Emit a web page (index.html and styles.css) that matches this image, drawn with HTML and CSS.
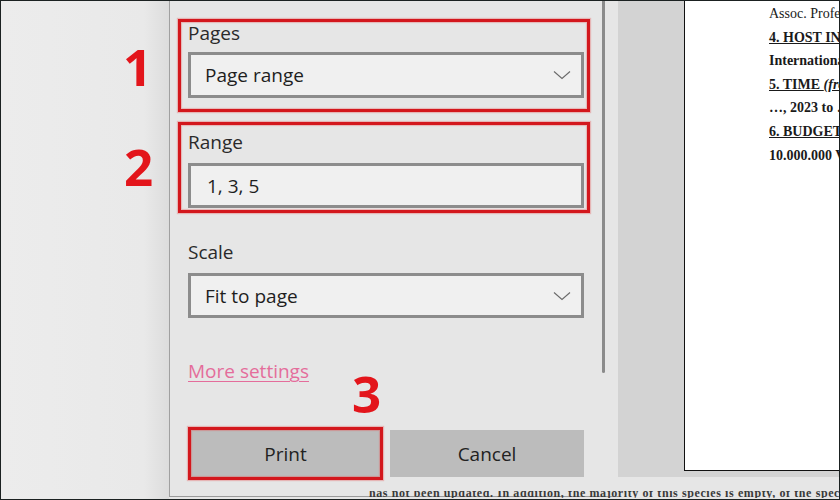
FILE: index.html
```html
<!DOCTYPE html>
<html>
<head>
<meta charset="utf-8">
<link rel="stylesheet" href="styles.css">
</head>
<body>
<div class="frame">
  <div class="backdrop"></div>
  <div class="panel">
    <div class="panel-body">
      <div class="group group-pages">
        <div class="label">Pages</div>
        <div class="select">
          <span>Page range</span>
          <svg class="chev" width="18" height="10" viewBox="0 0 18 10"><path d="M1 1.5 L9 8.5 L17 1.5" fill="none" stroke="#6a6a6a" stroke-width="1.1"/></svg>
        </div>
      </div>
      <div class="group group-range">
        <div class="label">Range</div>
        <div class="input">1, 3, 5</div>
      </div>
      <div class="label label-scale">Scale</div>
      <div class="select">
        <span>Fit to page</span>
        <svg class="chev" width="18" height="10" viewBox="0 0 18 10"><path d="M1 1.5 L9 8.5 L17 1.5" fill="none" stroke="#6a6a6a" stroke-width="1.1"/></svg>
      </div>
      <div class="more-row"><a class="more">More settings</a></div>
      <div class="buttons">
        <div class="btn btn-print">Print</div>
        <div class="btn btn-cancel">Cancel</div>
      </div>
    </div>
    <div class="scrollbar"></div>
  </div>
  <div class="preview">
    <div class="preview-area">
      <div class="page">
        <div class="doc">
          <div class="doc-line">Assoc. Professor</div>
          <div class="doc-line b u">4. HOST INSTITUTION</div>
          <div class="doc-line b">International University</div>
          <div class="doc-line b u">5. TIME <i>(from … to …)</i></div>
          <div class="doc-line b">…, 2023 to …</div>
          <div class="doc-line b u">6. BUDGET ESTIMATE</div>
          <div class="doc-line b">10.000.000 VND</div>
        </div>
      </div>
    </div>
  </div>
  <span class="step step-1">1</span>
  <span class="step step-2">2</span>
  <span class="step step-3">3</span>
  <div class="strip"><span>has not been updated. In addition, the majority of this species is empty, of the species in the list</span></div>
</div>
</body>
</html>
```
FILE: styles.css
```css
html, body {
  margin: 0;
  padding: 0;
  background: #e6e6e6;
}
.frame {
  position: relative;
  width: 840px;
  height: 500px;
  box-sizing: border-box;
  border: 1px solid #1b2121;
  display: flex;
  overflow: hidden;
  background: #e6e6e6;
  font-family: "Open Sans", "Noto Sans", sans-serif;
  color: #222;
}
.backdrop {
  width: 168px;
  flex: none;
  background: linear-gradient(to right, #ececec 0, #e9e9e9 85%, #dcdcdc 100%);
}
.panel {
  width: 449px;
  height: 496px;
  flex: none;
  box-sizing: border-box;
  border-left: 1px solid #a0a0a0;
  border-bottom: 1px solid #9a9a9a;
  display: flex;
  align-items: flex-start;
  padding-left: 18px;
  padding-right: 13px;
  gap: 18px;
  background: #e6e6e6;
}
.panel-body {
  width: 396px;
  flex: none;
  display: flex;
  flex-direction: column;
}
.scrollbar {
  width: 3px;
  height: 372px;
  background: #8b8b8b;
  border-radius: 0 0 2px 2px;
  flex: none;
}
.label {
  font-size: 19px;
  line-height: 22px;
  color: #2a2a2a;
}
.group {
  border: 3px solid #d3171d;
  box-shadow: 0 0 1px 1px rgba(230, 90, 90, 0.35), inset 0 0 1px 1px rgba(230, 90, 90, 0.35);
  margin-left: -10px;
  margin-right: -6px;
  padding-left: 7px;
  padding-right: 3px;
}
.group-pages {
  margin-top: 18px;
  padding-bottom: 11px;
}
.group-pages .select {
  margin-top: 8px;
}
.group-range {
  margin-top: 10px;
  padding-top: 6px;
  padding-bottom: 2px;
}
.select, .input {
  box-sizing: border-box;
  height: 46px;
  border: 3px solid #8c8c8c;
  background: #f0f0f0;
  display: flex;
  align-items: center;
  padding-left: 14px;
  padding-right: 10px;
  font-size: 19px;
  color: #1e1e1e;
}
.select span {
  flex: 1;
}
.input {
  margin-top: 10px;
  height: 45px;
  padding-left: 16px;
}
.label-scale {
  margin-top: 28px;
}
.label-scale + .select {
  margin-top: 10px;
  height: 45px;
}
.chev {
  display: block;
  flex: none;
}
.more-row {
  margin-top: 42px;
  line-height: 22px;
  font-size: 19px;
}
.more {
  color: #e46d9b;
  text-decoration: underline;
  text-decoration-thickness: 1px;
  text-underline-offset: 3px;
}
.buttons {
  margin-top: 45px;
  display: flex;
  align-items: center;
  gap: 7px;
}
.btn {
  box-sizing: border-box;
  display: flex;
  align-items: center;
  justify-content: center;
  background: #bcbcbc;
  font-size: 19px;
  color: #222;
}
.btn-print {
  width: 195px;
  height: 53px;
  border: 3px solid #d3171d;
  box-shadow: 0 0 1px 1px rgba(230, 90, 90, 0.35), inset 0 0 1px 1px rgba(230, 90, 90, 0.4);
}
.btn-cancel {
  width: 194px;
  height: 47px;
}
.preview {
  flex: 1;
  background: #e6e6e6;
}
.preview-area {
  height: 476px;
  background: #d3d3d3;
  padding-left: 66px;
  display: flex;
}
.page {
  flex: 1;
  height: 470px;
  box-sizing: border-box;
  background: #fff;
  border-left: 1px solid #111;
  border-bottom: 1px solid #111;
  overflow: hidden;
}
.doc {
  padding-left: 84px;
  padding-top: 1px;
  font-family: "Liberation Serif", "DejaVu Serif", serif;
  font-size: 14px;
  line-height: 23.6px;
  color: #1a1a1a;
  white-space: nowrap;
}
.doc-line.b {
  font-weight: bold;
}
.doc-line.u {
  text-decoration: underline;
}
.step {
  position: absolute;
  font-family: "Open Sans", "Noto Sans", sans-serif;
  font-weight: 700;
  font-size: 51px;
  line-height: 51px;
  color: #e3151b;
}
.step-1 { left: 122px; top: 40px; }
.step-2 { left: 123px; top: 140px; }
.step-3 { left: 351px; top: 367px; }
.strip {
  position: absolute;
  left: 368px;
  right: 0;
  bottom: 1px;
  height: 7px;
  overflow: hidden;
  font-family: "Liberation Serif", serif;
  font-weight: bold;
  font-size: 12px;
  line-height: 7px;
  color: #3a3a3a;
  white-space: nowrap;
  letter-spacing: 0.6px;
}
.strip span {
  display: block;
  margin-top: -1px;
}
```
